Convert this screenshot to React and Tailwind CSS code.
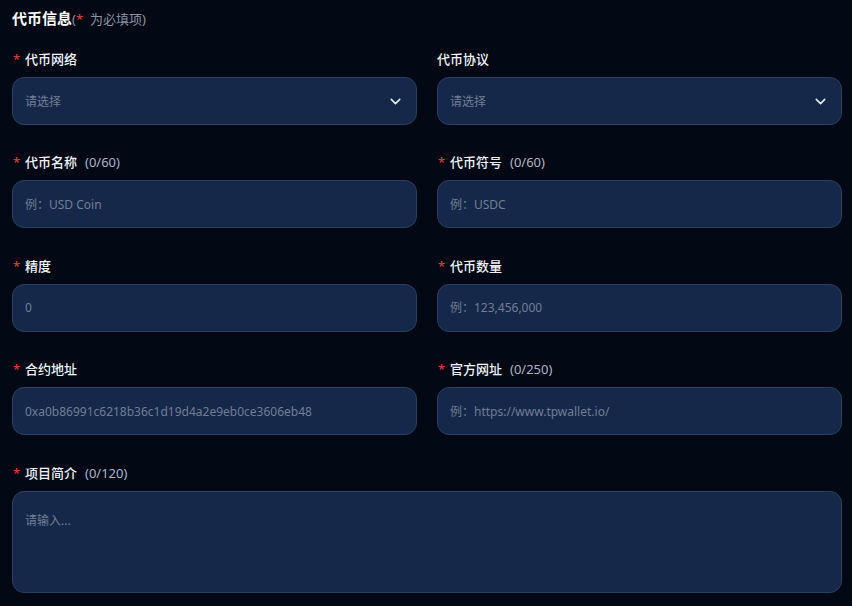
import { ChevronDown } from 'lucide-react'

const font = { fontFamily: '"Noto Sans", "Noto Sans CJK SC", sans-serif' }

function Label({ text, count, required = true }) {
  return (
    <div className="flex items-center h-[18px] text-[13px] leading-[18px]">
      {required && <span className="text-[#e5443a] w-[13px] pl-[1px]">*</span>}
      <span className="text-[#eef3fa] font-medium">{text}</span>
      {count && <span className="text-[#a9b6c8] ml-[8px]">{count}</span>}
    </div>
  )
}

function Field({ label, count, required, placeholder, select }) {
  return (
    <div className="flex flex-col">
      <Label text={label} count={count} required={required} />
      <div className="mt-[9px] h-[48px] rounded-[12px] border border-[#2b3f62] bg-[#15284a] flex items-center justify-between px-3">
        <span className="text-[12px] text-[#6f7e95] pt-[1px]">{placeholder}</span>
        {select && <ChevronDown size={17} strokeWidth={2.2} className="text-[#e6ebf3]" />}
      </div>
    </div>
  )
}

export default function App() {
  return (
    <div className="min-h-[606px] bg-[#020914] pl-3 pr-[10px] pt-[7px]" style={font}>
      <div className="flex items-baseline h-[20px]">
        <span className="text-[15px] font-bold text-white">代币信息</span>
        <span className="text-[13px] text-[#8a93a3]">(</span>
        <span className="text-[13px] text-[#e5443a]">*</span>
        <span className="text-[13px] text-[#8a93a3] ml-[7px]">为必填项)</span>
      </div>

      <div className="grid grid-cols-2 gap-x-[20px] gap-y-[28.4px] mt-[23px]">
        <Field label="代币网络" placeholder="请选择" select />
        <Field label="代币协议" required={false} placeholder="请选择" select />
        <Field label="代币名称" count="(0/60)" placeholder="例：USD Coin" />
        <Field label="代币符号" count="(0/60)" placeholder="例：USDC" />
        <Field label="精度" placeholder="0" />
        <Field label="代币数量" placeholder="例：123,456,000" />
        <Field label="合约地址" placeholder="0xa0b86991c6218b36c1d19d4a2e9eb0ce3606eb48" />
        <Field label="官方网址" count="(0/250)" placeholder="例：https://www.tpwallet.io/" />
      </div>

      <div className="flex flex-col mt-[28.6px]">
        <Label text="项目简介" count="(0/120)" />
        <div className="mt-[9px] h-[102px] rounded-[12px] border border-[#2b3f62] bg-[#15284a] px-3 pt-[15px]">
          <span className="text-[12px] text-[#6f7e95]">请输入...</span>
        </div>
      </div>
    </div>
  )
}
